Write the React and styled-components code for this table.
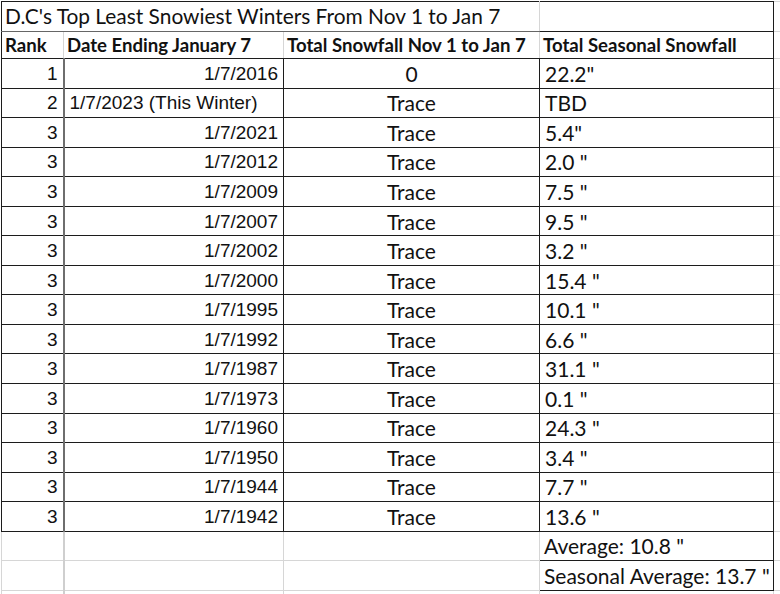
import styled, { createGlobalStyle, css } from "styled-components";

const GlobalStyle = createGlobalStyle`
  html, body {
    margin: 0;
    padding: 0;
    background: #fff;
  }
`;

const dark = "#1c1c1c";
const grid = "#d6d6d6";
const arial = `"Liberation Sans", Arial, sans-serif`;
const calibri = `Lato, "Open Sans", sans-serif`;

const Sheet = styled.div`
  width: 780px;
  height: 594px;
  overflow: hidden;
  padding: 1px 0 0 1px;
  box-sizing: border-box;
`;

const Table = styled.table`
  width: 779px;
  border-collapse: collapse;
  table-layout: fixed;
  color: #111;
`;

const Row = styled.tr`
  height: ${(p) => p.$h}px;
`;

const Cell = styled.td`
  padding: 0 5px;
  white-space: nowrap;
  overflow: hidden;
  vertical-align: middle;
  line-height: 1;
  font-family: ${(p) => (p.$arial ? arial : calibri)};
  font-size: ${(p) => (p.$arial ? 19 : 21)}px;
  text-align: ${(p) => p.$align || "left"};
  border: 1px solid ${dark};
`;

const TitleCell = styled(Cell)`
  font-size: 20.9px;
  padding-left: 3px;
  border-bottom-color: #666;
  border-right-color: ${grid};
`;

const HeadCell = styled(Cell)`
  font-weight: 700;
  font-size: 18.6px;
  padding-left: 3px;
  border-left-color: ${grid};
  border-right-color: ${grid};
  border-top-color: #666;
  ${(p) =>
    p.$first &&
    css`
      border-left-color: ${dark};
    `}
  ${(p) =>
    p.$last &&
    css`
      border-right-color: ${dark};
    `}
`;

const RankCell = styled(Cell)`
  border-right: 2px solid #6e6e6e;
`;

const Blank = styled.td`
  border: 1px solid ${grid};
  ${(p) =>
    p.$thick &&
    css`
      border-right: 2px solid #cfcfcf;
    `}
`;

const AvgCell = styled(Cell)`
  padding-left: 4px;
  border-top-color: ${dark};
`;

const Edge = styled.td`
  border: 1px solid ${grid};
  border-left: none;
`;

const rows = [
  ["1", "1/7/2016", "0", '22.2"'],
  ["2", "1/7/2023 (This Winter)", "Trace", "TBD"],
  ["3", "1/7/2021", "Trace", '5.4"'],
  ["3", "1/7/2012", "Trace", '2.0 "'],
  ["3", "1/7/2009", "Trace", '7.5 "'],
  ["3", "1/7/2007", "Trace", '9.5 "'],
  ["3", "1/7/2002", "Trace", '3.2 "'],
  ["3", "1/7/2000", "Trace", '15.4 "'],
  ["3", "1/7/1995", "Trace", '10.1 "'],
  ["3", "1/7/1992", "Trace", '6.6 "'],
  ["3", "1/7/1987", "Trace", '31.1 "'],
  ["3", "1/7/1973", "Trace", '0.1 "'],
  ["3", "1/7/1960", "Trace", '24.3 "'],
  ["3", "1/7/1950", "Trace", '3.4 "'],
  ["3", "1/7/1944", "Trace", '7.7 "'],
  ["3", "1/7/1942", "Trace", '13.6 "'],
];

export default function App() {
  return (
    <Sheet>
      <GlobalStyle />
      <Table>
        <colgroup>
          <col style={{ width: 62 }} />
          <col style={{ width: 220 }} />
          <col style={{ width: 256 }} />
          <col style={{ width: 234 }} />
          <col style={{ width: 7 }} />
        </colgroup>
        <tbody>
          <Row $h={30}>
            <TitleCell colSpan={3}>
              D.C's Top Least Snowiest Winters From Nov 1 to Jan 7
            </TitleCell>
            <HeadCell $last style={{ borderTopColor: dark }} />
            <Edge />
          </Row>
          <Row $h={27}>
            <HeadCell $first>Rank</HeadCell>
            <HeadCell>Date Ending January 7</HeadCell>
            <HeadCell>Total Snowfall Nov 1 to Jan 7</HeadCell>
            <HeadCell $last>Total Seasonal Snowfall</HeadCell>
            <Edge />
          </Row>
          {rows.map(([rank, date, total, season], i) => (
            <Row $h={29.56} key={i}>
              <RankCell $arial $align="right">
                {rank}
              </RankCell>
              <Cell $arial $align={date.includes("(") ? "left" : "right"}>
                {date}
              </Cell>
              <Cell $align="center">{total}</Cell>
              <Cell>{season}</Cell>
              <Edge />
            </Row>
          ))}
          <Row $h={29}>
            <Blank $thick />
            <Blank />
            <Blank />
            <AvgCell>Average: 10.8 "</AvgCell>
            <Edge />
          </Row>
          <Row $h={30}>
            <Blank $thick />
            <Blank />
            <Blank />
            <AvgCell>Seasonal Average: 13.7 "</AvgCell>
            <Edge />
          </Row>
          <Row $h={10}>
            <Blank $thick />
            <Blank />
            <Blank />
            <Blank />
            <Edge />
          </Row>
        </tbody>
      </Table>
    </Sheet>
  );
}
